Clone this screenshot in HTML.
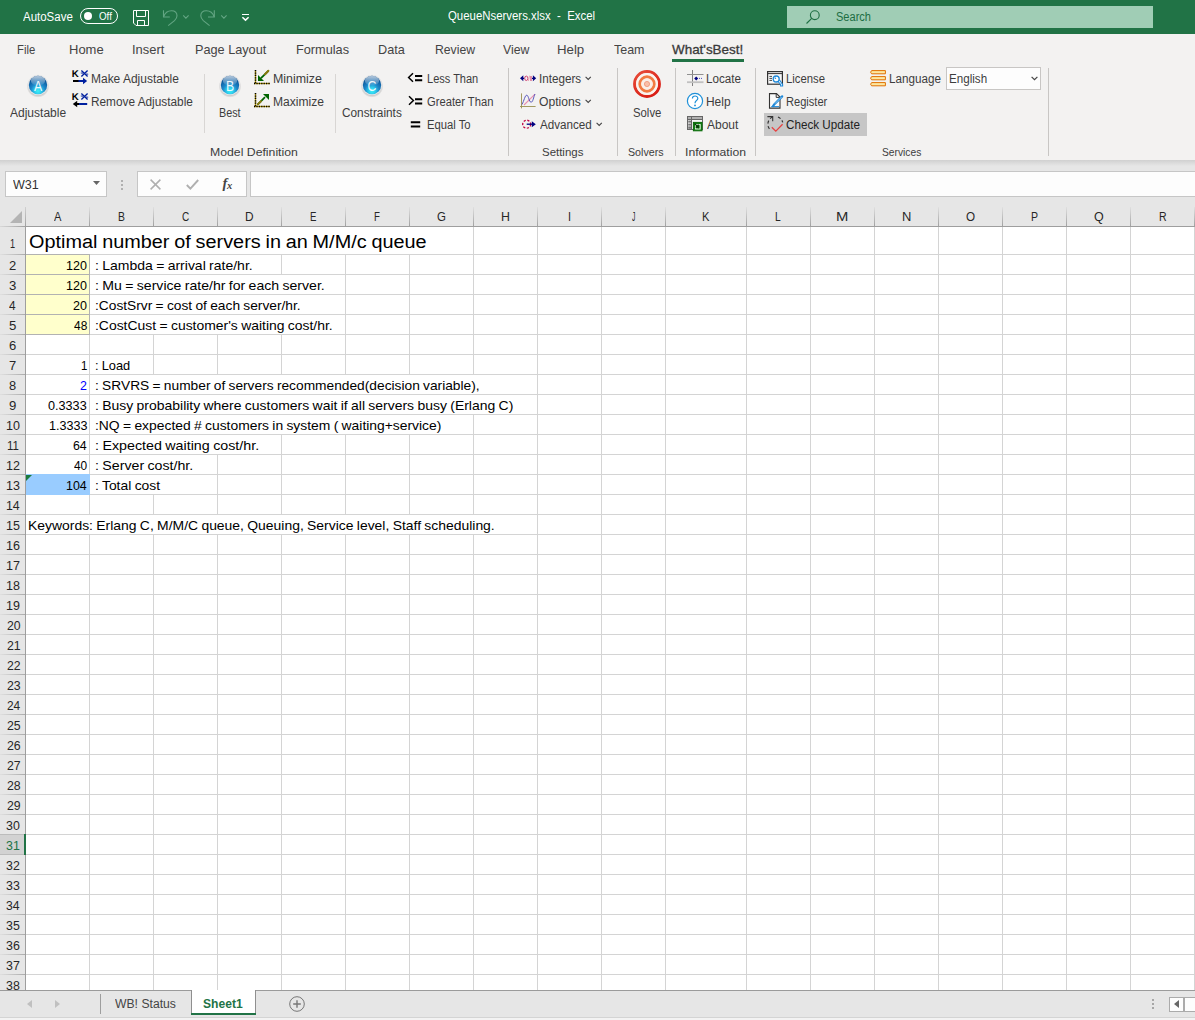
<!DOCTYPE html>
<html><head><meta charset="utf-8"><title>QueueNservers.xlsx - Excel</title>
<style>
html,body{margin:0;padding:0}
body{width:1195px;height:1020px;position:relative;overflow:hidden;background:#e6e6e6;font-family:"Liberation Sans",sans-serif}
.a{position:absolute}
.t{position:absolute;white-space:pre;line-height:1;transform-origin:0 0;font-family:"Liberation Sans",sans-serif}
svg{position:absolute;overflow:visible}
#titlebar{left:0;top:0;width:1195px;height:34px;background:#217346}
#ribbon{left:0;top:34px;width:1195px;height:126px;background:#f3f2f1}
#rshadow{left:0;top:160px;width:1195px;height:6px;background:linear-gradient(#d0d0d0,#e6e6e6)}
.box{background:#fdfdfd;border:1px solid #c6c6c6;box-sizing:border-box}
.gs{width:1px;background:#c8c6c4;top:68px;height:88px}
.bs{width:1px;background:#d8d6d4;top:74px;height:59px}
.vl{width:1px;background:#d4d4d4;top:227px;height:763px}
.hl{height:1px;background:#d4d4d4;left:26px;width:1169px}
.ch{width:1px;top:207px;height:20px;background:linear-gradient(#e0e0e0,#9e9e9e)}
.rh{height:1px;left:0;width:25px;background:linear-gradient(90deg,#e0e0e0,#ababab)}
.m{background:#fff;height:19px}

</style></head>
<body>
<div id="titlebar" class="a"></div>
<div class="a" style="left:787px;top:6px;width:366px;height:22px;background:#a0cdb5"></div>
<div class="a" style="left:80px;top:8px;width:38px;height:16px;box-sizing:border-box;border:1px solid #fff;border-radius:8px"></div>
<div class="a" style="left:84px;top:12px;width:8px;height:8px;border-radius:4px;background:#fff"></div>
<svg style="left:133px;top:10px" width="16" height="16" viewBox="0 0 16 16" fill="none" stroke="#fff" stroke-width="1"><path d="M0.5 0.5h15v15h-12.5l-2.5-2.5z"/><path d="M3.5 0.5v6h9v-6"/><path d="M4.5 15.5v-5h7v5"/></svg>
<svg style="left:163px;top:10px" width="16" height="16" viewBox="0 0 16 16" fill="none" stroke="#63a583" stroke-width="1.1"><path d="M0.5 0.3V7H6.8"/><path d="M0.6 6.8C2 2.6 5.5 0.7 8.5 0.7C12 0.7 14 3 14 5.8C14 8 13 9.3 11.5 10.6L5.2 15.6"/></svg>
<svg style="left:183px;top:14.6px" width="6" height="4" viewBox="0 0 6 4" fill="none" stroke="#63a583" stroke-width="1.1"><path d="M0.2 0.4l2.7 2.7l2.7-2.7"/></svg>
<svg style="left:199.8px;top:10px" width="16" height="16" viewBox="0 0 16 16" fill="none" stroke="#63a583" stroke-width="1.1"><g transform="translate(14.8,0) scale(-1,1)"><path d="M0.5 0.3V7H6.8"/><path d="M0.6 6.8C2 2.6 5.5 0.7 8.5 0.7C12 0.7 14 3 14 5.8C14 8 13 9.3 11.5 10.6L5.2 15.6"/></g></svg>
<svg style="left:221px;top:14.6px" width="6" height="4" viewBox="0 0 6 4" fill="none" stroke="#63a583" stroke-width="1.1"><path d="M0.2 0.4l2.7 2.7l2.7-2.7"/></svg>
<svg style="left:242px;top:13px" width="8" height="8" viewBox="0 0 8 8" fill="none" stroke="#fff"><path d="M0 1.5h7" stroke-width="1"/><path d="M0.4 4.2l3.1 2.9l3.1-2.9" stroke-width="1.5"/></svg>
<svg style="left:806px;top:10px" width="14" height="14" viewBox="0 0 14 14" fill="none" stroke="#1e6e43" stroke-width="1.1"><circle cx="8.8" cy="5.2" r="4.4"/><path d="M5.7 8.3L0.5 13.5"/></svg>
<div id="ribbon" class="a"></div>
<div id="rshadow" class="a"></div>
<div class="a" style="left:672px;top:59px;width:72px;height:3px;background:#217346"></div>
<div class="a gs" style="left:508px"></div>
<div class="a gs" style="left:617px"></div>
<div class="a gs" style="left:675px"></div>
<div class="a gs" style="left:755px"></div>
<div class="a gs" style="left:1048px"></div>
<div class="a bs" style="left:204px"></div>
<div class="a bs" style="left:335px"></div>
<div class="a" style="left:764px;top:113px;width:103px;height:23px;background:#c6c6c6"></div>
<div class="a box" style="left:946px;top:67px;width:95px;height:23px;border-color:#c8c6c4"></div>
<svg style="left:1031px;top:76px" width="7" height="5" viewBox="0 0 7 5" fill="none" stroke="#444" stroke-width="1.2"><path d="M0.6 0.8l2.9 2.9l2.9-2.9"/></svg>
<svg style="left:26px;top:73.3px" width="24" height="26" viewBox="0 0 24 26" ><defs><radialGradient id="gA" cx="50%" cy="82%" r="78%"><stop offset="0" stop-color="#3cf0f6"/><stop offset="0.22" stop-color="#2fd0ee"/><stop offset="0.5" stop-color="#1c86c8"/><stop offset="0.85" stop-color="#0c5a9e"/><stop offset="1" stop-color="#0b4f90"/></radialGradient><linearGradient id="hA" x1="0" y1="0" x2="0" y2="1"><stop offset="0" stop-color="#fff" stop-opacity="0.7"/><stop offset="1" stop-color="#fff" stop-opacity="0.05"/></linearGradient><radialGradient id="sA" cx="50%" cy="50%" r="50%"><stop offset="0.74" stop-color="#b8b8b8"/><stop offset="1" stop-color="#f3f2f1"/></radialGradient></defs><ellipse cx="12" cy="13.4" rx="11.4" ry="11.2" fill="url(#sA)"/><circle cx="12" cy="12" r="10.3" fill="#e2e4e6"/><circle cx="12" cy="12" r="9.2" fill="url(#gA)"/><ellipse cx="12" cy="7.8" rx="7.2" ry="4.8" fill="url(#hA)"/><text x="12" y="17.6" transform="translate(12,0) scale(0.82,1) translate(-12,0)" text-anchor="middle" font-family="Liberation Sans, sans-serif" font-size="15" fill="#fff" fill-opacity="0.92">A</text></svg>
<svg style="left:217.7px;top:73.3px" width="24" height="26" viewBox="0 0 24 26" ><defs><radialGradient id="gB" cx="50%" cy="82%" r="78%"><stop offset="0" stop-color="#3cf0f6"/><stop offset="0.22" stop-color="#2fd0ee"/><stop offset="0.5" stop-color="#1c86c8"/><stop offset="0.85" stop-color="#0c5a9e"/><stop offset="1" stop-color="#0b4f90"/></radialGradient><linearGradient id="hB" x1="0" y1="0" x2="0" y2="1"><stop offset="0" stop-color="#fff" stop-opacity="0.7"/><stop offset="1" stop-color="#fff" stop-opacity="0.05"/></linearGradient><radialGradient id="sB" cx="50%" cy="50%" r="50%"><stop offset="0.74" stop-color="#b8b8b8"/><stop offset="1" stop-color="#f3f2f1"/></radialGradient></defs><ellipse cx="12" cy="13.4" rx="11.4" ry="11.2" fill="url(#sB)"/><circle cx="12" cy="12" r="10.3" fill="#e2e4e6"/><circle cx="12" cy="12" r="9.2" fill="url(#gB)"/><ellipse cx="12" cy="7.8" rx="7.2" ry="4.8" fill="url(#hB)"/><text x="12" y="17.6" transform="translate(12,0) scale(0.82,1) translate(-12,0)" text-anchor="middle" font-family="Liberation Sans, sans-serif" font-size="15" fill="#fff" fill-opacity="0.92">B</text></svg>
<svg style="left:360px;top:73.3px" width="24" height="26" viewBox="0 0 24 26" ><defs><radialGradient id="gC" cx="50%" cy="82%" r="78%"><stop offset="0" stop-color="#3cf0f6"/><stop offset="0.22" stop-color="#2fd0ee"/><stop offset="0.5" stop-color="#1c86c8"/><stop offset="0.85" stop-color="#0c5a9e"/><stop offset="1" stop-color="#0b4f90"/></radialGradient><linearGradient id="hC" x1="0" y1="0" x2="0" y2="1"><stop offset="0" stop-color="#fff" stop-opacity="0.7"/><stop offset="1" stop-color="#fff" stop-opacity="0.05"/></linearGradient><radialGradient id="sC" cx="50%" cy="50%" r="50%"><stop offset="0.74" stop-color="#b8b8b8"/><stop offset="1" stop-color="#f3f2f1"/></radialGradient></defs><ellipse cx="12" cy="13.4" rx="11.4" ry="11.2" fill="url(#sC)"/><circle cx="12" cy="12" r="10.3" fill="#e2e4e6"/><circle cx="12" cy="12" r="9.2" fill="url(#gC)"/><ellipse cx="12" cy="7.8" rx="7.2" ry="4.8" fill="url(#hC)"/><text x="12" y="17.6" transform="translate(12,0) scale(0.82,1) translate(-12,0)" text-anchor="middle" font-family="Liberation Sans, sans-serif" font-size="15" fill="#fff" fill-opacity="0.92">C</text></svg>
<svg style="left:72px;top:70px" width="17" height="15" viewBox="0 0 17 15" ><text x="-0.2" y="7" text-rendering="geometricPrecision" font-family="Liberation Sans, sans-serif" font-weight="bold" font-size="9.7" fill="#000">K</text><path d="M9.4 0.5L15.6 6.6M15.6 0.5L9.4 6.6" stroke="#00209f" stroke-width="1.35" fill="none"/><path d="M13.8 4L16.2 4.2M8.8 3L11.2 3.2" stroke="#00209f" stroke-width="0.9" fill="none"/><path d="M1 11h6" stroke="#000" stroke-width="2"/><path d="M6.5 11h5" stroke="#00209f" stroke-width="2"/><path d="M11 7.8l4.2 3.2l-4.2 3.2z" fill="#00209f"/></svg>
<svg style="left:72px;top:93px" width="17" height="15" viewBox="0 0 17 15" ><text x="-0.2" y="7" text-rendering="geometricPrecision" font-family="Liberation Sans, sans-serif" font-weight="bold" font-size="9.7" fill="#000">K</text><path d="M9.4 0.5L15.6 6.6M15.6 0.5L9.4 6.6" stroke="#00209f" stroke-width="1.35" fill="none"/><path d="M13.8 4L16.2 4.2M8.8 3L11.2 3.2" stroke="#00209f" stroke-width="0.9" fill="none"/><path d="M5 11h10.2" stroke="#00209f" stroke-width="2"/><path d="M5.2 7.8l-4.4 3.2l4.4 3.2z" fill="#000"/><path d="M4 11h3" stroke="#000" stroke-width="2"/></svg>
<svg style="left:254px;top:70px" width="16" height="15" viewBox="0 0 16 15" ><path d="M1.5 0.4v13.6" stroke="#b89a00" stroke-width="1.3"/><path d="M1.5 0v14.6" stroke="#000" stroke-width="1.5" stroke-dasharray="1.25 1.15"/><path d="M0.4 13.5h15.6" stroke="#b89a00" stroke-width="1.3"/><path d="M0 13.5h16" stroke="#000" stroke-width="1.5" stroke-dasharray="1.25 1.15"/><path d="M14.4 0.8L7 8.2" stroke="#006400" stroke-width="1.8"/><path d="M14.4 0.8L11 4.2" stroke="#8a7a10" stroke-width="2" stroke-linecap="round"/><path d="M4 5v6h6z" fill="#006400"/></svg>
<svg style="left:254px;top:93px" width="16" height="15" viewBox="0 0 16 15" ><path d="M1.5 0.4v13.6" stroke="#b89a00" stroke-width="1.3"/><path d="M1.5 0v14.6" stroke="#000" stroke-width="1.5" stroke-dasharray="1.25 1.15"/><path d="M0.4 13.5h15.6" stroke="#b89a00" stroke-width="1.3"/><path d="M0 13.5h16" stroke="#000" stroke-width="1.5" stroke-dasharray="1.25 1.15"/><path d="M3.6 11.6L11 4.2" stroke="#006400" stroke-width="1.8"/><path d="M3.8 11.4L7 8.2" stroke="#8a7a10" stroke-width="2" stroke-linecap="round"/><path d="M9 1h6v6z" fill="#006400"/></svg>
<svg style="left:407px;top:72px" width="16" height="12" viewBox="0 0 16 12" ><path d="M6 1.3L1.6 5.5L6 9.7" stroke="#000" stroke-width="1.5" fill="none"/><path d="M8 4h7.2M8 8.2h7.2" stroke="#000" stroke-width="2"/></svg>
<svg style="left:407px;top:95px" width="16" height="12" viewBox="0 0 16 12" ><path d="M2 1.3L6.4 5.5L2 9.7" stroke="#000" stroke-width="1.5" fill="none"/><path d="M8 4.2h7.2M8 8.4h7.2" stroke="#000" stroke-width="2"/></svg>
<svg style="left:410px;top:120px" width="11" height="9" viewBox="0 0 11 9" ><path d="M0.8 2.2h9.4M0.8 6.5h9.4" stroke="#000" stroke-width="2"/></svg>
<svg style="left:520px;top:74px" width="17" height="9" viewBox="0 0 17 9" ><path d="M0 4.3l3.3-3v6z M16.2 4.3l-3.3-3v6z" fill="#000080"/><path d="M3 4.3h1.2M12 4.3h1.2" stroke="#000080" stroke-width="1.2"/><ellipse cx="6.3" cy="4.3" rx="1.6" ry="2.2" fill="none" stroke="#d04070" stroke-width="1"/><path d="M9.6 1.6L8.4 7" stroke="#e8a0b0" stroke-width="0.9"/><path d="M11 2v5" stroke="#d04070" stroke-width="1.1"/></svg>
<svg style="left:519px;top:93px" width="18" height="16" viewBox="0 0 18 16" ><path d="M2.5 0.4v15" stroke="#9a9050" stroke-width="0.9"/><path d="M1 13.5h15.6" stroke="#9a9050" stroke-width="0.9"/><path d="M5 12L16 1.2" stroke="#e890b0" stroke-width="1.1"/><path d="M3 11.5C5 8 6 2 7.8 2.2S10 9 12 9.2S14.5 4 16 1" stroke="#4848b8" stroke-width="0.9" fill="none"/></svg>
<svg style="left:521px;top:118px" width="16" height="12" viewBox="0 0 16 12" ><circle cx="5.7" cy="6.2" r="4" fill="none" stroke="#c00040" stroke-width="1.3" stroke-dasharray="2.2 1.6"/><path d="M5.7 6.2h6" stroke="#000080" stroke-width="1.3"/><path d="M10.8 3.2l4 3l-4 3z" fill="#000080"/></svg>
<svg style="left:585px;top:76px" width="7" height="5" viewBox="0 0 7 5" ><path d="M0.6 0.8l2.6 2.6l2.6-2.6" fill="none" stroke="#444" stroke-width="1.1"/></svg>
<svg style="left:585px;top:99px" width="7" height="5" viewBox="0 0 7 5" ><path d="M0.6 0.8l2.6 2.6l2.6-2.6" fill="none" stroke="#444" stroke-width="1.1"/></svg>
<svg style="left:596px;top:122px" width="7" height="5" viewBox="0 0 7 5" ><path d="M0.6 0.8l2.6 2.6l2.6-2.6" fill="none" stroke="#444" stroke-width="1.1"/></svg>
<svg style="left:633px;top:70px" width="28" height="28" viewBox="0 0 28 28" ><defs><radialGradient id="tg" cx="40%" cy="35%" r="75%"><stop offset="0" stop-color="#f06a50"/><stop offset="1" stop-color="#d81810"/></radialGradient></defs><circle cx="14" cy="14" r="12.4" fill="none" stroke="url(#tg)" stroke-width="3"/><circle cx="14" cy="14" r="9.8" fill="none" stroke="#fbf3ee" stroke-width="2.2"/><circle cx="14" cy="14" r="7.2" fill="none" stroke="#f27a40" stroke-width="2.9"/><circle cx="14" cy="14" r="4.5" fill="none" stroke="#fbeee6" stroke-width="2.6"/><circle cx="14" cy="14" r="2.6" fill="#f9c0a8" stroke="#f08868" stroke-width="0.7"/></svg>
<svg style="left:687px;top:70px" width="17" height="16" viewBox="0 0 17 16" ><path d="M5.5 0v16" stroke="#808080" stroke-width="1"/><path d="M0 4.5h16.5" stroke="#909090" stroke-width="1"/><path d="M0 12.2h16.5" stroke="#c0c0c0" stroke-width="1.8"/><path d="M9.2 6.4l2 2l-2 2l-2-2z" fill="#000080"/><path d="M12 8.4h4" stroke="#5050c0" stroke-width="1" stroke-dasharray="1 1"/></svg>
<svg style="left:686px;top:92px" width="18" height="18" viewBox="0 0 18 18" ><circle cx="9" cy="9" r="7.6" fill="#fff" stroke="#1e90d8" stroke-width="1.2"/><path d="M6.4 6.6C6.4 3.2 11.8 3.2 11.8 6.4C11.8 8.6 9 8.6 9 11.2" fill="none" stroke="#1e90d8" stroke-width="1.2"/><circle cx="9" cy="13.4" r="0.9" fill="#1e90d8"/></svg>
<svg style="left:687px;top:116px" width="17" height="16" viewBox="0 0 17 16" ><rect x="0.5" y="0.5" width="15" height="13" fill="#f6f6f6" stroke="#666" stroke-width="1"/><rect x="0.5" y="0.5" width="15" height="3" fill="#b0b0b0" stroke="#666"/><path d="M4.5 0.5v13" stroke="#666"/><rect x="1.2" y="4.6" width="2.8" height="2" fill="#777"/><rect x="1.2" y="7.6" width="2.8" height="2" fill="#777"/><rect x="1.2" y="10.4" width="2.8" height="2.4" fill="#777"/><rect x="6.4" y="6.4" width="8.6" height="8.4" fill="#108010" stroke="#0c6c0c"/><rect x="8.6" y="8.6" width="4.6" height="4.4" fill="none" stroke="#e8f4e8" stroke-width="1"/><path d="M7.6 7.6l3.6 3.6v-2.6M11.2 11.2h-2.6" stroke="#053805" stroke-width="1.2" fill="none"/></svg>
<svg style="left:767px;top:71px" width="17" height="16" viewBox="0 0 17 16" ><rect x="0.6" y="0.6" width="14.8" height="12.6" fill="#f8f8f8" stroke="#333" stroke-width="1.2"/><path d="M0.6 2.6h14.8" stroke="#333" stroke-width="1"/><path d="M2.4 5.4h2.6M2.4 7.4h2.6M2.4 9.4h2.6" stroke="#333" stroke-width="0.9"/><path d="M10.6 10l3 3.4v1.6h2v-1.6l-3.2-4.6" fill="#fff" stroke="#1e88d8" stroke-width="1.1"/><circle cx="9.2" cy="8" r="3" fill="#fff" stroke="#1e88d8" stroke-width="1.3"/><circle cx="8.4" cy="7.2" r="0.8" fill="#1e88d8"/></svg>
<svg style="left:768px;top:93px" width="16" height="16" viewBox="0 0 16 16" ><path d="M1.5 0.6h7l3.5 3.5v11h-10.5z" fill="#fafafa" stroke="#333" stroke-width="1.1"/><path d="M8.2 0.6v3.8h3.8" fill="none" stroke="#333" stroke-width="1"/><path d="M14.2 3.4L6.4 11.2L5 13.2" stroke="#1e88d8" stroke-width="2.2" stroke-linecap="round" fill="none"/><path d="M13.6 4L7 10.6" stroke="#bfe0f8" stroke-width="0.7"/><path d="M3.2 13.6h8" stroke="#1e88d8" stroke-width="1"/></svg>
<svg style="left:766px;top:115px" width="18" height="18" viewBox="0 0 18 18" ><path d="M6.7 1.6C1.2 5 0.2 11 4.6 15.2" fill="none" stroke="#333" stroke-width="1.1" stroke-dasharray="3.2 2.4"/><path d="M12 2C14.6 3.2 16 5 16.8 7.4" fill="none" stroke="#333" stroke-width="1.1" stroke-dasharray="3 2.2"/><path d="M1.4 1.6h5.3v4.6" fill="none" stroke="#333" stroke-width="1.1"/><path d="M5.8 12.2l4 3.9l6.8-6.8" fill="none" stroke="#e84040" stroke-width="1.3"/></svg>
<svg style="left:870px;top:70px" width="17" height="17" viewBox="0 0 17 17" ><path d="M1.6 0.6h13.8v3.2h-13.8l-1-1.6z" fill="#fde8a0" stroke="#e07000" stroke-width="1"/><path d="M1.6 6.6h13.8v3.2h-13.8l-1-1.6z" fill="#fde8a0" stroke="#e07000" stroke-width="1"/><path d="M1.6 12.6h13.8v3.2h-13.8l-1-1.6z" fill="#fde8a0" stroke="#e07000" stroke-width="1"/></svg>
<div class="a box" style="left:5px;top:171px;width:102px;height:26px"></div>
<div class="a box" style="left:137px;top:171px;width:110px;height:26px"></div>
<div class="a box" style="left:250px;top:171px;width:950px;height:26px"></div>
<svg style="left:93px;top:181px" width="7" height="4" viewBox="0 0 7 4"><path d="M0 0h7l-3.5 4z" fill="#666"/></svg>
<div class="a" style="left:121px;top:180px;width:2px;height:2px;background:#b0b0b0"></div>
<div class="a" style="left:121px;top:184px;width:2px;height:2px;background:#b0b0b0"></div>
<div class="a" style="left:121px;top:188px;width:2px;height:2px;background:#b0b0b0"></div>
<svg style="left:150px;top:179px" width="11" height="11" viewBox="0 0 11 11" fill="none" stroke="#b0b0b0" stroke-width="1.5"><path d="M0.6 0.6l9.8 9.8M10.4 0.6l-9.8 9.8"/></svg>
<svg style="left:186px;top:179px" width="13" height="11" viewBox="0 0 13 11" fill="none" stroke="#b0b0b0" stroke-width="1.9"><path d="M0.8 6l3.6 3.6L12.2 1"/></svg>
<span class="t" style="left:222.5px;top:175.5px;font:italic bold 14.5px/1 'Liberation Serif',serif;color:#444;letter-spacing:-0.3px">f<span style="font-size:10.5px;position:relative;top:1px">x</span></span>
<div class="a" style="left:26px;top:227px;width:1169px;height:763px;background:#fff"></div>
<div class="a" style="left:26px;top:255px;width:63px;height:80px;background:#ffffcc"></div>
<div class="a vl" style="left:89px"></div>
<div class="a ch" style="left:89px"></div>
<div class="a vl" style="left:153px"></div>
<div class="a ch" style="left:153px"></div>
<div class="a vl" style="left:217px"></div>
<div class="a ch" style="left:217px"></div>
<div class="a vl" style="left:281px"></div>
<div class="a ch" style="left:281px"></div>
<div class="a vl" style="left:345px"></div>
<div class="a ch" style="left:345px"></div>
<div class="a vl" style="left:409px"></div>
<div class="a ch" style="left:409px"></div>
<div class="a vl" style="left:473px"></div>
<div class="a ch" style="left:473px"></div>
<div class="a vl" style="left:537px"></div>
<div class="a ch" style="left:537px"></div>
<div class="a vl" style="left:601px"></div>
<div class="a ch" style="left:601px"></div>
<div class="a vl" style="left:665px"></div>
<div class="a ch" style="left:665px"></div>
<div class="a vl" style="left:746px"></div>
<div class="a ch" style="left:746px"></div>
<div class="a vl" style="left:810px"></div>
<div class="a ch" style="left:810px"></div>
<div class="a vl" style="left:874px"></div>
<div class="a ch" style="left:874px"></div>
<div class="a vl" style="left:938px"></div>
<div class="a ch" style="left:938px"></div>
<div class="a vl" style="left:1002px"></div>
<div class="a ch" style="left:1002px"></div>
<div class="a vl" style="left:1066px"></div>
<div class="a ch" style="left:1066px"></div>
<div class="a vl" style="left:1130px"></div>
<div class="a ch" style="left:1130px"></div>
<div class="a vl" style="left:1194px"></div>
<div class="a ch" style="left:1194px"></div>
<div class="a hl" style="top:254px"></div>
<div class="a rh" style="top:254px"></div>
<div class="a hl" style="top:274px"></div>
<div class="a rh" style="top:274px"></div>
<div class="a hl" style="top:294px"></div>
<div class="a rh" style="top:294px"></div>
<div class="a hl" style="top:314px"></div>
<div class="a rh" style="top:314px"></div>
<div class="a hl" style="top:334px"></div>
<div class="a rh" style="top:334px"></div>
<div class="a hl" style="top:354px"></div>
<div class="a rh" style="top:354px"></div>
<div class="a hl" style="top:374px"></div>
<div class="a rh" style="top:374px"></div>
<div class="a hl" style="top:394px"></div>
<div class="a rh" style="top:394px"></div>
<div class="a hl" style="top:414px"></div>
<div class="a rh" style="top:414px"></div>
<div class="a hl" style="top:434px"></div>
<div class="a rh" style="top:434px"></div>
<div class="a hl" style="top:454px"></div>
<div class="a rh" style="top:454px"></div>
<div class="a hl" style="top:474px"></div>
<div class="a rh" style="top:474px"></div>
<div class="a hl" style="top:494px"></div>
<div class="a rh" style="top:494px"></div>
<div class="a hl" style="top:514px"></div>
<div class="a rh" style="top:514px"></div>
<div class="a hl" style="top:534px"></div>
<div class="a rh" style="top:534px"></div>
<div class="a hl" style="top:554px"></div>
<div class="a rh" style="top:554px"></div>
<div class="a hl" style="top:574px"></div>
<div class="a rh" style="top:574px"></div>
<div class="a hl" style="top:594px"></div>
<div class="a rh" style="top:594px"></div>
<div class="a hl" style="top:614px"></div>
<div class="a rh" style="top:614px"></div>
<div class="a hl" style="top:634px"></div>
<div class="a rh" style="top:634px"></div>
<div class="a hl" style="top:654px"></div>
<div class="a rh" style="top:654px"></div>
<div class="a hl" style="top:674px"></div>
<div class="a rh" style="top:674px"></div>
<div class="a hl" style="top:694px"></div>
<div class="a rh" style="top:694px"></div>
<div class="a hl" style="top:714px"></div>
<div class="a rh" style="top:714px"></div>
<div class="a hl" style="top:734px"></div>
<div class="a rh" style="top:734px"></div>
<div class="a hl" style="top:754px"></div>
<div class="a rh" style="top:754px"></div>
<div class="a hl" style="top:774px"></div>
<div class="a rh" style="top:774px"></div>
<div class="a hl" style="top:794px"></div>
<div class="a rh" style="top:794px"></div>
<div class="a hl" style="top:814px"></div>
<div class="a rh" style="top:814px"></div>
<div class="a hl" style="top:834px"></div>
<div class="a rh" style="top:834px"></div>
<div class="a hl" style="top:854px"></div>
<div class="a rh" style="top:854px"></div>
<div class="a hl" style="top:874px"></div>
<div class="a rh" style="top:874px"></div>
<div class="a hl" style="top:894px"></div>
<div class="a rh" style="top:894px"></div>
<div class="a hl" style="top:914px"></div>
<div class="a rh" style="top:914px"></div>
<div class="a hl" style="top:934px"></div>
<div class="a rh" style="top:934px"></div>
<div class="a hl" style="top:954px"></div>
<div class="a rh" style="top:954px"></div>
<div class="a hl" style="top:974px"></div>
<div class="a rh" style="top:974px"></div>
<div class="a" style="left:26px;top:254px;width:64px;height:1px;background:#b2b2b2"></div>
<div class="a" style="left:26px;top:274px;width:64px;height:1px;background:#b2b2b2"></div>
<div class="a" style="left:26px;top:294px;width:64px;height:1px;background:#b2b2b2"></div>
<div class="a" style="left:26px;top:314px;width:64px;height:1px;background:#b2b2b2"></div>
<div class="a" style="left:26px;top:334px;width:64px;height:1px;background:#b2b2b2"></div>
<div class="a" style="left:89px;top:254px;width:1px;height:81px;background:#b2b2b2"></div>
<div class="a" style="left:26px;top:474px;width:64px;height:21px;background:#99ccff"></div>
<div class="a m" style="left:28px;top:227px;width:399px;height:27px"></div>
<div class="a m" style="left:92px;top:255px;width:161px;height:19px"></div>
<div class="a m" style="left:92px;top:275px;width:233px;height:19px"></div>
<div class="a m" style="left:92px;top:295px;width:209px;height:19px"></div>
<div class="a m" style="left:92px;top:315px;width:241px;height:19px"></div>
<div class="a m" style="left:92px;top:375px;width:388px;height:19px"></div>
<div class="a m" style="left:92px;top:395px;width:422px;height:19px"></div>
<div class="a m" style="left:92px;top:415px;width:350px;height:19px"></div>
<div class="a m" style="left:92px;top:435px;width:167px;height:19px"></div>
<div class="a m" style="left:92px;top:455px;width:101px;height:19px"></div>
<div class="a m" style="left:92px;top:475px;width:69px;height:19px"></div>
<div class="a m" style="left:28px;top:515px;width:467px;height:19px"></div>
<div class="a" style="left:0;top:835px;width:25px;height:19px;background:#d2d2d2"></div>
<div class="a" style="left:0;top:834px;width:24px;height:1px;background:#bcbcbc"></div><div class="a" style="left:0;top:854px;width:24px;height:1px;background:#bcbcbc"></div>
<div class="a" style="left:24px;top:834px;width:2px;height:21px;background:#217346"></div>
<div class="a" style="left:25px;top:207px;width:1px;height:783px;background:linear-gradient(#d0d0d0,#9e9e9e 20px,#9e9e9e)"></div>
<div class="a" style="left:0;top:834px;width:24px;height:1px;background:#bcbcbc"></div><div class="a" style="left:0;top:854px;width:24px;height:1px;background:#bcbcbc"></div>
<div class="a" style="left:24px;top:834px;width:2px;height:21px;background:#217346"></div>
<div class="a" style="left:0;top:226px;width:1195px;height:1px;background:linear-gradient(90deg,#d8d8d8,#9e9e9e 26px,#9e9e9e)"></div>
<svg style="left:10px;top:211px" width="12" height="12" viewBox="0 0 12 12"><path d="M12 0v12h-12z" fill="#b4b4b4"/></svg>
<svg style="left:26px;top:475px" width="6" height="6" viewBox="0 0 6 6"><path d="M0 0h6l-6 6z" fill="#1a7a3c"/></svg>
<div class="a" style="left:0;top:990px;width:1195px;height:28px;background:#e6e6e6"></div>
<div class="a" style="left:0;top:1018px;width:1195px;height:2px;background:#f3f3f3"></div>
<div class="a" style="left:0;top:1017px;width:1195px;height:1px;background:#d4d4d4"></div>
<div class="a" style="left:0;top:990px;width:1195px;height:1px;background:#9b9b9b"></div>
<div class="a" style="left:191px;top:990px;width:65px;height:23px;background:#fff;border-left:1px solid #8f8f8f;border-right:1px solid #8f8f8f;box-sizing:border-box"></div>
<div class="a" style="left:191px;top:1013px;width:65px;height:2px;background:#217346"></div>
<div class="a" style="left:100px;top:994px;width:1px;height:20px;background:#9e9e9e"></div>
<svg style="left:27px;top:1000px" width="5" height="8" viewBox="0 0 5 8"><path d="M5 0v8l-5-4z" fill="#c0c0c0"/></svg>
<svg style="left:55px;top:1000px" width="5" height="8" viewBox="0 0 5 8"><path d="M0 0v8l5-4z" fill="#c0c0c0"/></svg>
<svg style="left:289px;top:996px" width="16" height="16" viewBox="0 0 16 16" fill="none" stroke="#777" stroke-width="1"><circle cx="8" cy="8" r="7.3"/><path d="M8 4.2v7.6M4.2 8h7.6" stroke-width="1.4"/></svg>
<div class="a" style="left:1152px;top:999px;width:2px;height:2px;background:#a6a6a6"></div>
<div class="a" style="left:1152px;top:1003px;width:2px;height:2px;background:#a6a6a6"></div>
<div class="a" style="left:1152px;top:1007px;width:2px;height:2px;background:#a6a6a6"></div>
<div class="a box" style="left:1169px;top:997px;width:15px;height:15px;border-color:#ababab"></div>
<div class="a box" style="left:1184px;top:997px;width:15px;height:15px;border-color:#ababab"></div>
<svg style="left:1174px;top:1000px" width="5" height="8" viewBox="0 0 5 8"><path d="M5 0v8l-5-4z" fill="#666"/></svg>
<div id="texts">
<span class="t" style="left:23.29px;top:10.50px;font-size:12px;color:#fff;transform:scaleX(0.9568);">AutoSave</span>
<span class="t" style="left:98.77px;top:12.00px;font-size:10px;color:#fff;transform:scaleX(0.9763);">Off</span>
<span class="t" style="left:447.84px;top:10.00px;font-size:12px;color:#fff;transform:scaleX(0.9504);">QueueNservers.xlsx  -  Excel</span>
<span class="t" style="left:835.99px;top:10.50px;font-size:12px;color:#1e6e43;transform:scaleX(0.9199);">Search</span>
<span class="t" style="left:17.12px;top:43.00px;font-size:13px;color:#444;transform:scaleX(0.8671);">File</span>
<span class="t" style="left:69.06px;top:43.00px;font-size:13px;color:#444;transform:scaleX(0.9994);">Home</span>
<span class="t" style="left:131.94px;top:43.00px;font-size:13px;color:#444;transform:scaleX(0.9928);">Insert</span>
<span class="t" style="left:195.35px;top:43.00px;font-size:13px;color:#444;transform:scaleX(0.9754);">Page Layout</span>
<span class="t" style="left:296.41px;top:43.00px;font-size:13px;color:#444;transform:scaleX(0.9793);">Formulas</span>
<span class="t" style="left:378.46px;top:43.00px;font-size:13px;color:#444;transform:scaleX(0.9757);">Data</span>
<span class="t" style="left:434.89px;top:43.00px;font-size:13px;color:#444;transform:scaleX(0.9388);">Review</span>
<span class="t" style="left:503.26px;top:43.00px;font-size:13px;color:#444;transform:scaleX(0.9421);">View</span>
<span class="t" style="left:557.43px;top:43.00px;font-size:13px;color:#444;transform:scaleX(1.0188);">Help</span>
<span class="t" style="left:613.55px;top:43.00px;font-size:13px;color:#444;transform:scaleX(0.9586);">Team</span>
<span class="t" style="left:672.39px;top:43.00px;font-size:13px;color:#3a3a3a;transform:scaleX(1.0325);-webkit-text-stroke:0.3px #3a3a3a;">What'sBest!</span>
<span class="t" style="left:10.30px;top:107.00px;font-size:12px;color:#3d3d3d;transform:scaleX(1.0008);">Adjustable</span>
<span class="t" style="left:91.27px;top:73.00px;font-size:12px;color:#3d3d3d;transform:scaleX(0.9978);">Make Adjustable</span>
<span class="t" style="left:91.30px;top:96.00px;font-size:12px;color:#3d3d3d;transform:scaleX(0.9853);">Remove Adjustable</span>
<span class="t" style="left:218.95px;top:107.00px;font-size:12px;color:#3d3d3d;transform:scaleX(0.8999);">Best</span>
<span class="t" style="left:272.88px;top:73.00px;font-size:12px;color:#3d3d3d;transform:scaleX(1.0345);">Minimize</span>
<span class="t" style="left:272.83px;top:96.00px;font-size:12px;color:#3d3d3d;transform:scaleX(1.0056);">Maximize</span>
<span class="t" style="left:342.14px;top:107.00px;font-size:12px;color:#3d3d3d;transform:scaleX(0.9853);">Constraints</span>
<span class="t" style="left:426.94px;top:73.00px;font-size:12px;color:#3d3d3d;transform:scaleX(0.9179);">Less Than</span>
<span class="t" style="left:427.15px;top:96.00px;font-size:12px;color:#3d3d3d;transform:scaleX(0.9329);">Greater Than</span>
<span class="t" style="left:426.82px;top:119.00px;font-size:12px;color:#3d3d3d;transform:scaleX(0.9383);">Equal To</span>
<span class="t" style="left:209.90px;top:147.00px;font-size:11.5px;color:#3d3d3d;transform:scaleX(1.0657);">Model Definition</span>
<span class="t" style="left:538.80px;top:73.00px;font-size:12px;color:#3d3d3d;transform:scaleX(0.9730);">Integers</span>
<span class="t" style="left:539.26px;top:96.00px;font-size:12px;color:#3d3d3d;transform:scaleX(1.0109);">Options</span>
<span class="t" style="left:539.70px;top:119.00px;font-size:12px;color:#3d3d3d;transform:scaleX(0.9703);">Advanced</span>
<span class="t" style="left:542.15px;top:147.00px;font-size:11.5px;color:#3d3d3d;transform:scaleX(0.9955);">Settings</span>
<span class="t" style="left:632.70px;top:107.00px;font-size:12px;color:#3d3d3d;transform:scaleX(0.9453);">Solve</span>
<span class="t" style="left:628.04px;top:147.00px;font-size:11.5px;color:#3d3d3d;transform:scaleX(0.9273);">Solvers</span>
<span class="t" style="left:706.12px;top:73.00px;font-size:12px;color:#3d3d3d;transform:scaleX(0.9703);">Locate</span>
<span class="t" style="left:706.10px;top:96.00px;font-size:12px;color:#3d3d3d;transform:scaleX(0.9943);">Help</span>
<span class="t" style="left:706.90px;top:119.00px;font-size:12px;color:#3d3d3d;transform:scaleX(1.0003);">About</span>
<span class="t" style="left:684.76px;top:147.00px;font-size:11.5px;color:#3d3d3d;transform:scaleX(1.0594);">Information</span>
<span class="t" style="left:785.93px;top:73.00px;font-size:12px;color:#3d3d3d;transform:scaleX(0.9419);">License</span>
<span class="t" style="left:785.88px;top:96.00px;font-size:12px;color:#3d3d3d;transform:scaleX(0.9236);">Register</span>
<span class="t" style="left:785.73px;top:119.00px;font-size:12px;color:#222;transform:scaleX(0.9716);">Check Update</span>
<span class="t" style="left:888.64px;top:73.00px;font-size:12px;color:#3d3d3d;transform:scaleX(0.9729);">Language</span>
<span class="t" style="left:948.52px;top:73.00px;font-size:12px;color:#3d3d3d;transform:scaleX(0.9693);">English</span>
<span class="t" style="left:882.05px;top:147.00px;font-size:11.5px;color:#3d3d3d;transform:scaleX(0.8909);">Services</span>
<span class="t" style="left:12.72px;top:178.00px;font-size:13px;color:#333;transform:scaleX(0.9635);">W31</span>
<span class="t" style="left:53.75px;top:210.00px;font-size:13.2px;color:#262626;transform:scaleX(0.8384);">A</span>
<span class="t" style="left:118.30px;top:210.00px;font-size:13.2px;color:#262626;transform:scaleX(0.7890);">B</span>
<span class="t" style="left:182.33px;top:210.00px;font-size:13.2px;color:#262626;transform:scaleX(0.7595);">C</span>
<span class="t" style="left:244.99px;top:210.00px;font-size:13.2px;color:#262626;transform:scaleX(0.9001);">D</span>
<span class="t" style="left:310.09px;top:210.00px;font-size:13.2px;color:#262626;transform:scaleX(0.7309);">E</span>
<span class="t" style="left:374.29px;top:210.00px;font-size:13.2px;color:#262626;transform:scaleX(0.7305);">F</span>
<span class="t" style="left:437.27px;top:210.00px;font-size:13.2px;color:#262626;transform:scaleX(0.8713);">G</span>
<span class="t" style="left:500.98px;top:210.00px;font-size:13.2px;color:#262626;transform:scaleX(0.9348);">H</span>
<span class="t" style="left:567.93px;top:210.00px;font-size:13.2px;color:#262626;transform:scaleX(0.8240);">I</span>
<span class="t" style="left:632.12px;top:210.00px;font-size:13.2px;color:#262626;transform:scaleX(0.5066);">J</span>
<span class="t" style="left:702.14px;top:210.00px;font-size:13.2px;color:#262626;transform:scaleX(0.8471);">K</span>
<span class="t" style="left:775.37px;top:210.00px;font-size:13.2px;color:#262626;transform:scaleX(0.7788);">L</span>
<span class="t" style="left:835.86px;top:210.00px;font-size:13.2px;color:#262626;transform:scaleX(1.1218);">M</span>
<span class="t" style="left:901.75px;top:210.00px;font-size:13.2px;color:#262626;transform:scaleX(0.9815);">N</span>
<span class="t" style="left:966.26px;top:210.00px;font-size:13.2px;color:#262626;transform:scaleX(0.8868);">O</span>
<span class="t" style="left:1030.83px;top:210.00px;font-size:13.2px;color:#262626;transform:scaleX(0.8008);">P</span>
<span class="t" style="left:1093.80px;top:210.00px;font-size:13.2px;color:#262626;transform:scaleX(0.9458);">Q</span>
<span class="t" style="left:1158.74px;top:210.00px;font-size:13.2px;color:#262626;transform:scaleX(0.8001);">R</span>
<span class="t" style="left:10.14px;top:237.40px;font-size:13.2px;color:#262626;transform:scaleX(0.6935);">1</span>
<span class="t" style="left:8.94px;top:259.00px;font-size:13.2px;color:#262626;transform:scaleX(0.9847);">2</span>
<span class="t" style="left:8.84px;top:279.00px;font-size:13.2px;color:#262626;transform:scaleX(0.9995);">3</span>
<span class="t" style="left:9.44px;top:299.00px;font-size:13.2px;color:#262626;transform:scaleX(0.8965);">4</span>
<span class="t" style="left:8.80px;top:319.00px;font-size:13.2px;color:#262626;transform:scaleX(1.0006);">5</span>
<span class="t" style="left:8.61px;top:339.00px;font-size:13.2px;color:#262626;transform:scaleX(0.9897);">6</span>
<span class="t" style="left:8.62px;top:359.00px;font-size:13.2px;color:#262626;transform:scaleX(0.9835);">7</span>
<span class="t" style="left:8.80px;top:379.00px;font-size:13.2px;color:#262626;transform:scaleX(0.9750);">8</span>
<span class="t" style="left:8.63px;top:399.00px;font-size:13.2px;color:#262626;transform:scaleX(0.9993);">9</span>
<span class="t" style="left:6.31px;top:419.00px;font-size:13.2px;color:#262626;transform:scaleX(0.9491);">10</span>
<span class="t" style="left:6.59px;top:439.00px;font-size:13.2px;color:#262626;transform:scaleX(0.8671);">11</span>
<span class="t" style="left:6.31px;top:459.00px;font-size:13.2px;color:#262626;transform:scaleX(0.9494);">12</span>
<span class="t" style="left:6.31px;top:479.00px;font-size:13.2px;color:#262626;transform:scaleX(0.9512);">13</span>
<span class="t" style="left:6.32px;top:499.00px;font-size:13.2px;color:#262626;transform:scaleX(0.9344);">14</span>
<span class="t" style="left:6.31px;top:519.00px;font-size:13.2px;color:#262626;transform:scaleX(0.9499);">15</span>
<span class="t" style="left:6.31px;top:539.00px;font-size:13.2px;color:#262626;transform:scaleX(0.9518);">16</span>
<span class="t" style="left:6.31px;top:559.00px;font-size:13.2px;color:#262626;transform:scaleX(0.9494);">17</span>
<span class="t" style="left:6.31px;top:579.00px;font-size:13.2px;color:#262626;transform:scaleX(0.9505);">18</span>
<span class="t" style="left:6.31px;top:599.00px;font-size:13.2px;color:#262626;transform:scaleX(0.9494);">19</span>
<span class="t" style="left:6.90px;top:619.00px;font-size:13.2px;color:#262626;transform:scaleX(0.9274);">20</span>
<span class="t" style="left:6.56px;top:639.00px;font-size:13.2px;color:#262626;transform:scaleX(0.9319);">21</span>
<span class="t" style="left:6.90px;top:659.00px;font-size:13.2px;color:#262626;transform:scaleX(0.9275);">22</span>
<span class="t" style="left:6.56px;top:679.00px;font-size:13.2px;color:#262626;transform:scaleX(0.9335);">23</span>
<span class="t" style="left:6.92px;top:699.00px;font-size:13.2px;color:#262626;transform:scaleX(0.9019);">24</span>
<span class="t" style="left:6.56px;top:719.00px;font-size:13.2px;color:#262626;transform:scaleX(0.9323);">25</span>
<span class="t" style="left:6.56px;top:739.00px;font-size:13.2px;color:#262626;transform:scaleX(0.9341);">26</span>
<span class="t" style="left:7.02px;top:759.00px;font-size:13.2px;color:#262626;transform:scaleX(0.9275);">27</span>
<span class="t" style="left:6.56px;top:779.00px;font-size:13.2px;color:#262626;transform:scaleX(0.9329);">28</span>
<span class="t" style="left:6.56px;top:799.00px;font-size:13.2px;color:#262626;transform:scaleX(0.9319);">29</span>
<span class="t" style="left:6.47px;top:819.00px;font-size:13.2px;color:#262626;transform:scaleX(0.9383);">30</span>
<span class="t" style="left:6.47px;top:839.00px;font-size:13.2px;color:#217346;transform:scaleX(0.9386);">31</span>
<span class="t" style="left:6.47px;top:859.00px;font-size:13.2px;color:#262626;transform:scaleX(0.9386);">32</span>
<span class="t" style="left:6.47px;top:879.00px;font-size:13.2px;color:#262626;transform:scaleX(0.9403);">33</span>
<span class="t" style="left:6.47px;top:899.00px;font-size:13.2px;color:#262626;transform:scaleX(0.9239);">34</span>
<span class="t" style="left:6.41px;top:919.00px;font-size:13.2px;color:#262626;transform:scaleX(0.9379);">35</span>
<span class="t" style="left:6.47px;top:939.00px;font-size:13.2px;color:#262626;transform:scaleX(0.9409);">36</span>
<span class="t" style="left:6.47px;top:959.00px;font-size:13.2px;color:#262626;transform:scaleX(0.9386);">37</span>
<span class="t" style="left:6.47px;top:979.00px;font-size:13.2px;color:#262626;transform:scaleX(0.9397);">38</span>
<span class="t" style="left:29.30px;top:232.40px;font-size:19.2px;color:#000;transform:scaleX(1.0345);word-spacing:-0.7px;">Optimal number of servers in an M/M/c queue</span>
<span class="t" style="left:65.91px;top:259.00px;font-size:13.2px;color:#000;transform:scaleX(0.9494);">120</span>
<span class="t" style="left:65.91px;top:279.00px;font-size:13.2px;color:#000;transform:scaleX(0.9494);">120</span>
<span class="t" style="left:73.16px;top:299.00px;font-size:13.2px;color:#000;transform:scaleX(0.9526);">20</span>
<span class="t" style="left:73.59px;top:319.00px;font-size:13.2px;color:#000;transform:scaleX(0.9033);">48</span>
<span class="t" style="left:80.69px;top:359.00px;font-size:13.2px;color:#000;transform:scaleX(0.8679);">1</span>
<span class="t" style="left:79.73px;top:379.00px;font-size:13.2px;color:#0000ff;transform:scaleX(0.9418);">2</span>
<span class="t" style="left:48.31px;top:399.00px;font-size:13.2px;color:#000;transform:scaleX(0.9586);">0.3333</span>
<span class="t" style="left:48.51px;top:419.00px;font-size:13.2px;color:#000;transform:scaleX(0.9538);">1.3333</span>
<span class="t" style="left:72.97px;top:439.00px;font-size:13.2px;color:#000;transform:scaleX(0.9372);">64</span>
<span class="t" style="left:73.61px;top:459.00px;font-size:13.2px;color:#000;transform:scaleX(0.9013);">40</span>
<span class="t" style="left:65.91px;top:479.00px;font-size:13.2px;color:#000;transform:scaleX(0.9425);">104</span>
<span class="t" style="left:94.89px;top:259.00px;font-size:13.2px;color:#000;transform:scaleX(1.0607);word-spacing:-0.5px;">: Lambda = arrival rate/hr.</span>
<span class="t" style="left:94.60px;top:279.00px;font-size:13.2px;color:#000;transform:scaleX(1.0670);word-spacing:-0.5px;">: Mu = service rate/hr for each server.</span>
<span class="t" style="left:94.70px;top:299.00px;font-size:13.2px;color:#000;transform:scaleX(1.0427);word-spacing:-0.5px;">:CostSrvr = cost of each server/hr.</span>
<span class="t" style="left:94.72px;top:319.00px;font-size:13.2px;color:#000;transform:scaleX(1.0556);word-spacing:-0.5px;">:CostCust = customer's waiting cost/hr.</span>
<span class="t" style="left:94.75px;top:359.00px;font-size:13.2px;color:#000;transform:scaleX(0.9727);word-spacing:-0.5px;">: Load</span>
<span class="t" style="left:94.75px;top:379.00px;font-size:13.2px;color:#000;transform:scaleX(1.0424);word-spacing:-0.5px;">: SRVRS = number of servers recommended(decision variable),</span>
<span class="t" style="left:94.89px;top:399.00px;font-size:13.2px;color:#000;transform:scaleX(1.0579);word-spacing:-0.5px;">: Busy probability where customers wait if all servers busy (Erlang C)</span>
<span class="t" style="left:94.89px;top:419.00px;font-size:13.2px;color:#000;transform:scaleX(1.0513);word-spacing:-0.5px;">:NQ = expected # customers in system ( waiting+service)</span>
<span class="t" style="left:94.87px;top:439.00px;font-size:13.2px;color:#000;transform:scaleX(1.0821);word-spacing:-0.5px;">: Expected waiting cost/hr.</span>
<span class="t" style="left:94.88px;top:459.00px;font-size:13.2px;color:#000;transform:scaleX(1.0751);word-spacing:-0.5px;">: Server cost/hr.</span>
<span class="t" style="left:94.89px;top:479.00px;font-size:13.2px;color:#000;transform:scaleX(1.0538);word-spacing:-0.5px;">: Total cost</span>
<span class="t" style="left:28.01px;top:519.00px;font-size:13.2px;color:#000;transform:scaleX(1.0550);word-spacing:-0.5px;">Keywords: Erlang C, M/M/C queue, Queuing, Service level, Staff scheduling.</span>
<span class="t" style="left:114.72px;top:997.60px;font-size:12.5px;color:#444;transform:scaleX(0.9740);">WB! Status</span>
<span class="t" style="left:203.15px;top:996.60px;font-size:13px;color:#217346;transform:scaleX(0.9299);font-weight:bold;">Sheet1</span>
</div>
</body></html>
